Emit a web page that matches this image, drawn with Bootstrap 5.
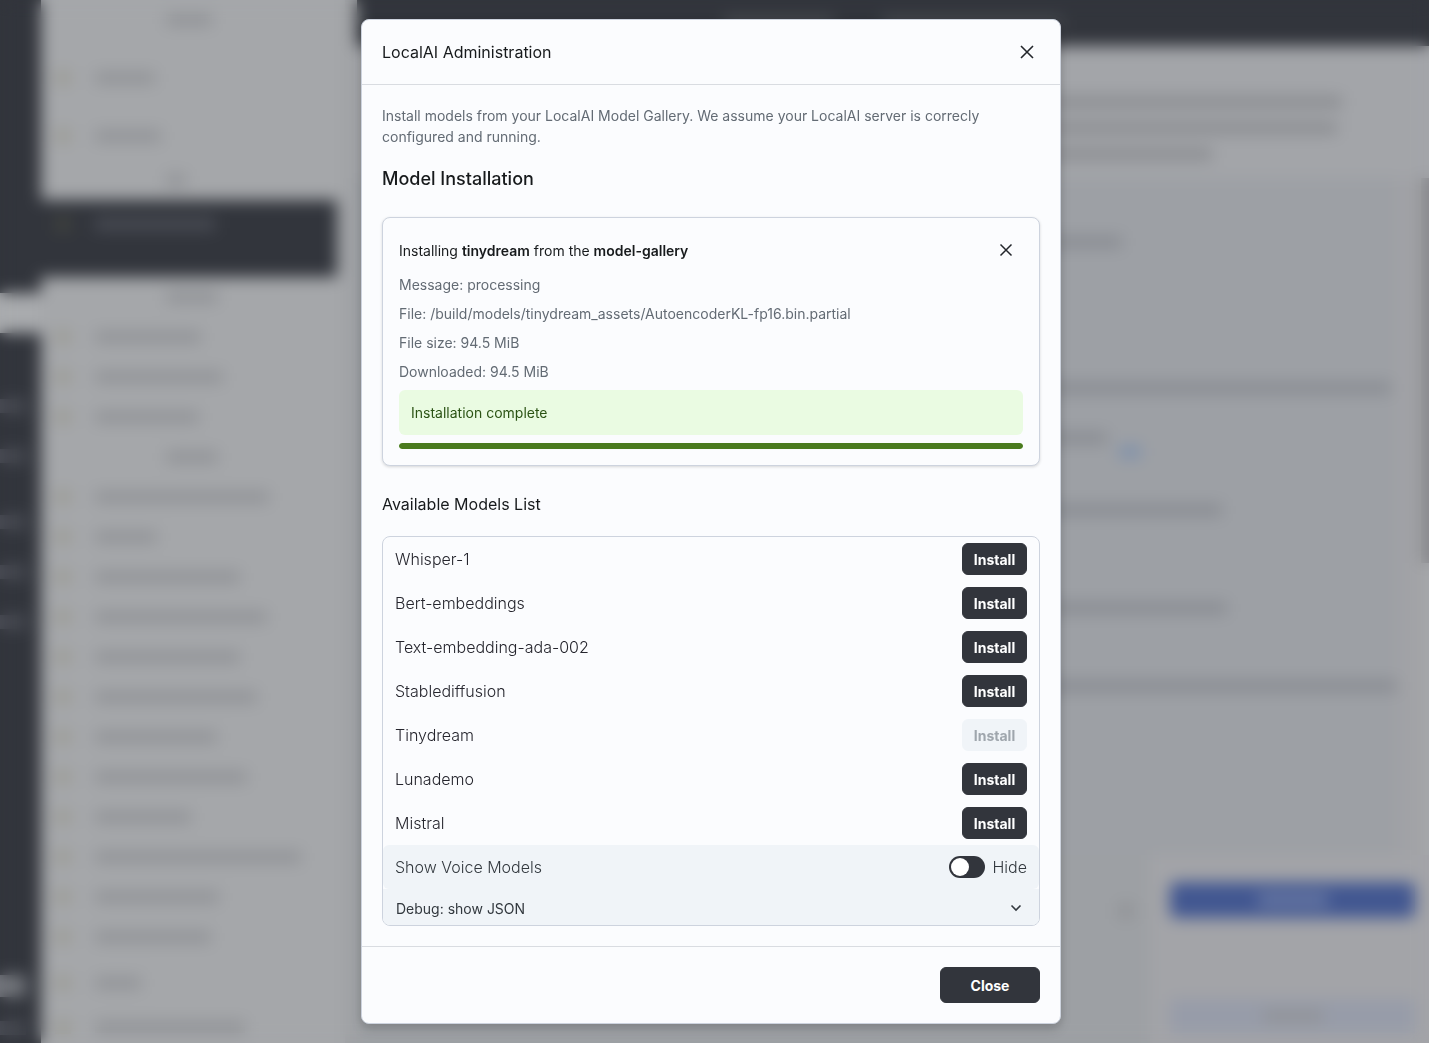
<!DOCTYPE html>
<html lang="en">
<head>
<meta charset="utf-8">
<meta name="viewport" content="width=device-width, initial-scale=1">
<title>LocalAI Administration</title>
<link href="https://cdn.jsdelivr.net/npm/bootstrap@5.3.0/dist/css/bootstrap.min.css" rel="stylesheet">
<style>
:root { --ink: #32353c; --line: #cdd3de; --soft: #f0f4f8; --paper: #fbfcfe; }
body { font-family: Inter, "Liberation Sans", sans-serif; font-size: 14px; line-height: 21px; color: #171a1c; overflow: hidden; }

/* application behind the dialog */
.app-shell { height: 100vh; background: #a5a7aa; overflow: hidden; }
.app-rail { width: 41px; background: var(--ink); padding-top: 293px; }
.rail-current { height: 40px; background: #a9abae; margin-bottom: 66px; }
.rail-dot { width: 26px; height: 14px; margin-bottom: 36px; background: #4a4d55; }
.rail-dot.rail-lit { background: #74777d; height: 22px; }
.rail-space { height: 310px; }
.app-drawer { width: 316px; border-right: 12px solid #9fa1a4; }
.drawer-row { height: 40px; gap: 24px; padding-left: 14px; }
.drawer-row.row-label { padding-left: 125px; }
.drawer-row.row-current { height: 77px; background: var(--ink); margin-right: 8px; }
.ghost-bar { height: 12px; background: #919397; }
.row-current .ghost-bar { background: #4a4d55; margin-bottom: 30px; }
.ghost-icon { width: 16px; height: 14px; background: #9b9b95; }
.row-current .ghost-icon { background: #42443f; margin-bottom: 30px; }
.app-bar { height: 46px; background: var(--ink); }
.app-bar .ghost-bar { background: #4a4c52; }
.chat-text { background: #a3a5a9; height: 132px; padding: 50px 0 0 40px; }
.chat-text .ghost-bar { margin-bottom: 14px; background: #8b8d91; }
.chat-area { background: #9da0a5; padding-left: 60px; border-right: 24px solid #a1a2a6; }
.chat-line { height: 40px; gap: 12px; }
.chat-area .ghost-bar { background: #898c92; }
.ghost-link { width: 22px; height: 12px; background: #7d90ab; align-self: flex-end; }
.chat-scroll { width: 12px; height: 385px; background: #898a8e; }
.composer { height: 188px; background: #9da0a4; }
.composer-side { width: 279px; background: #a3a4a8; padding: 27px 14px 0 20px; }
.send-block { height: 36px; background: #425791; border-radius: 6px; margin-bottom: 81px; }
.send-block .ghost-bar { background: #6b7ba5; }
.call-block { height: 34px; background: #979ca9; }
.blur-veil { position: fixed; inset: 0; backdrop-filter: blur(8px); }

/* dialog */
.admin-modal { padding-right: 7px; }
.admin-modal .modal-dialog { max-width: 700px; margin-top: 0; margin-bottom: 0; min-height: 100%; }
.admin-modal .modal-content { background: var(--paper); border: 1px solid var(--line); border-radius: 8px; box-shadow: 0 2px 8px rgba(21, 21, 21, .12), 0 6px 12px rgba(21, 21, 21, .12); }
.admin-modal .modal-header { height: 65px; padding: 0 20px; border-color: #d9dce1; }
.admin-modal .modal-body { padding: 20px; }
.admin-modal .modal-footer { padding: 20px; border-color: #d9dce1; }
.admin-modal .modal-footer > * { margin: 0; }
.title-text { font-size: 16px; line-height: 24px; font-weight: 400; }
.section-text { font-size: 18px; line-height: 24px; font-weight: 500; margin: 20px 0 26px; }
.list-title { margin: 26px 0 20px; }
.muted-text { color: #636b74; }
.x-button { width: 26px; height: 32px; padding: 0; border: 0; background: none; color: #23262b; }
.install-card { padding: 16px; border: 1px solid var(--line); border-radius: 8px; box-shadow: 0 1px 3px rgba(21, 21, 21, .16); background: var(--paper); }
.done-note { padding: 12px; border-radius: 6px; background: #eafbe2; color: #2b5314; }
.done-track { height: 6px; border-radius: 3px; background: #eafbe2; }
.done-track .progress-bar { background: #4a7a1e; border-radius: 3px; }
.model-list { border: 1px solid var(--line); border-radius: 8px; overflow: hidden; }
.model-row { height: 44px; padding: 0 12px; font-size: 16px; line-height: 24px; font-weight: 300; color: #25252d; }
.voice-row { background: var(--soft); color: #32383e; border-radius: 6px; }
.debug-row { height: 36px; padding: 2px 17px 0 13px; border: 0; background: var(--soft); color: #32383e; }
.solid-button { --bs-btn-color: #fff; --bs-btn-bg: #32353c; --bs-btn-border-color: #32353c; --bs-btn-hover-color: #fff; --bs-btn-hover-bg: #23262b; --bs-btn-disabled-color: #9fa6ad; --bs-btn-disabled-bg: #f0f4f8; --bs-btn-disabled-border-color: #f0f4f8; --bs-btn-disabled-opacity: 1; --bs-btn-border-radius: 6px; --bs-btn-font-size: 14px; --bs-btn-font-weight: 700; --bs-btn-line-height: 21px; }
.install-button { width: 65px; height: 32px; padding: 0; }
.close-button { width: 100px; height: 36px; padding: 0; }
.voice-switch { min-height: 0; padding: 0; gap: 8px; }
.voice-switch .form-check-input { float: none; width: 36px; height: 22px; margin: 0; border: 0; background-color: var(--ink); --bs-form-switch-bg: url("data:image/svg+xml,%3csvg xmlns='http://www.w3.org/2000/svg' viewBox='0 0 22 22'%3e%3ccircle cx='11' cy='11' r='9' fill='%23fff'/%3e%3c/svg%3e"); }
</style>
<script src="https://cdn.jsdelivr.net/npm/bootstrap@5.3.0/dist/js/bootstrap.bundle.min.js"></script>
</head>
<body>

<div class="app-shell d-flex" aria-hidden="true">
  <div class="app-rail flex-shrink-0">
    <div class="rail-current"></div>
    <div class="rail-dot"></div><div class="rail-dot"></div>
    <div class="pt-3"></div>
    <div class="rail-dot"></div><div class="rail-dot"></div><div class="rail-dot"></div>
    <div class="rail-space"></div>
    <div class="rail-dot rail-lit mb-4"></div><div class="rail-dot"></div>
  </div>
  <div class="app-drawer flex-shrink-0" id="drawer"></div>
  <div class="flex-grow-1 d-flex flex-column overflow-hidden">
    <div class="app-bar flex-shrink-0 d-flex align-items-center justify-content-center gap-5"><div class="ghost-bar" style="width: 110px"></div><div class="ghost-bar" style="width: 180px"></div></div>
    <div class="chat-text flex-shrink-0">
      <div class="ghost-bar" style="width: 945px"></div><div class="ghost-bar" style="width: 940px"></div><div class="ghost-bar" style="width: 815px"></div>
    </div>
    <div class="flex-grow-1 d-flex overflow-hidden">
      <div class="chat-area flex-grow-1" id="chat"></div>
      <div class="chat-scroll flex-shrink-0"></div>
    </div>
    <div class="composer flex-shrink-0 d-flex justify-content-end">
      <div class="ghost-bar me-3 mt-5" style="width: 16px; height: 16px"></div>
      <div class="composer-side">
        <div class="send-block d-flex align-items-center justify-content-center"><div class="ghost-bar" style="width: 70px"></div></div>
        <div class="call-block d-flex align-items-center justify-content-center"><div class="ghost-bar" style="width: 60px"></div></div>
      </div>
    </div>
  </div>
</div>
<div class="blur-veil"></div>

<div class="modal admin-modal d-block" tabindex="-1" role="dialog" aria-modal="true" aria-labelledby="dialogTitle">
  <div class="modal-dialog modal-dialog-centered">
    <div class="modal-content">
      <div class="modal-header">
        <h1 class="title-text mb-0" id="dialogTitle">LocalAI Administration</h1>
        <button type="button" class="x-button d-flex align-items-center justify-content-center" aria-label="Close dialog">
          <svg width="24" height="24" viewBox="0 0 24 24" fill="none" stroke="currentColor" stroke-width="1.6"><path d="M6 6l12 12M18 6L6 18"/></svg>
        </button>
      </div>
      <div class="modal-body">
        <p class="muted-text mb-0">Install models from your LocalAI Model Gallery. We assume your LocalAI server is correcly configured and running.</p>
        <h2 class="section-text">Model Installation</h2>

        <section class="install-card">
          <div class="d-flex align-items-center justify-content-between pe-1 mb-2">
            <div>Installing <b class="fw-semibold">tinydream</b> from the <b class="fw-semibold">model-gallery</b></div>
            <button type="button" class="x-button d-flex align-items-center justify-content-center" aria-label="Dismiss installation">
              <svg width="22" height="22" viewBox="0 0 24 24" fill="none" stroke="currentColor" stroke-width="1.6"><path d="M6 6l12 12M18 6L6 18"/></svg>
            </button>
          </div>
          <div class="muted-text d-grid gap-2">
            <div>Message: processing</div>
            <div>File: /build/models/tinydream_assets/AutoencoderKL-fp16.bin.partial</div>
            <div>File size: 94.5 MiB</div>
            <div>Downloaded: 94.5 MiB</div>
          </div>
          <div class="done-note mt-2 mb-2" role="status">Installation complete</div>
          <div class="progress done-track" role="progressbar" aria-label="Installation progress" aria-valuenow="100" aria-valuemin="0" aria-valuemax="100"><div class="progress-bar" style="width: 100%"></div></div>
        </section>

        <h2 class="title-text list-title">Available Models List</h2>

        <div class="model-list">
          <div class="model-row d-flex align-items-center justify-content-between">Whisper-1 <button type="button" class="btn solid-button install-button">Install</button></div>
          <div class="model-row d-flex align-items-center justify-content-between">Bert-embeddings <button type="button" class="btn solid-button install-button">Install</button></div>
          <div class="model-row d-flex align-items-center justify-content-between">Text-embedding-ada-002 <button type="button" class="btn solid-button install-button">Install</button></div>
          <div class="model-row d-flex align-items-center justify-content-between">Stablediffusion <button type="button" class="btn solid-button install-button">Install</button></div>
          <div class="model-row d-flex align-items-center justify-content-between">Tinydream <button type="button" class="btn solid-button install-button" disabled>Install</button></div>
          <div class="model-row d-flex align-items-center justify-content-between">Lunademo <button type="button" class="btn solid-button install-button">Install</button></div>
          <div class="model-row d-flex align-items-center justify-content-between">Mistral <button type="button" class="btn solid-button install-button">Install</button></div>
          <div class="model-row voice-row d-flex align-items-center justify-content-between">
            Show Voice Models
            <div class="form-check form-switch voice-switch d-flex align-items-center mb-0">
              <input class="form-check-input" type="checkbox" role="switch" id="voiceSwitch">
              <label for="voiceSwitch">Hide</label>
            </div>
          </div>
          <button type="button" class="debug-row w-100 d-flex align-items-center justify-content-between">
            Debug: show JSON
            <svg width="12" height="12" viewBox="0 0 12 12" fill="none" stroke="currentColor" stroke-width="1.6"><path d="M1.5 3.5L6 8l4.500-4.500"/></svg>
          </button>
        </div>
      </div>
      <div class="modal-footer">
        <button type="button" class="btn solid-button close-button">Close</button>
      </div>
    </div>
  </div>
</div>

<script>
// Sidebar rows: [kind, size]; size is the bar width, or the height of a gap
const drawerRows = [
  ['label', 46], ['gap', 18], ['item', 60], ['gap', 18], ['item', 66], ['gap', 4], ['label', 20],
  ['current', 120], ['label', 52], ['item', 106], ['item', 128], ['item', 104], ['label', 52],
  ['item', 174], ['item', 62], ['item', 145], ['item', 172], ['item', 145], ['item', 162],
  ['item', 122], ['item', 152], ['item', 96], ['item', 206], ['item', 124], ['item', 116],
  ['gap', 6], ['item', 46], ['gap', 4], ['item', 150]
];
document.getElementById('drawer').innerHTML = drawerRows.map(([kind, size]) =>
  kind === 'gap' ? `<div style="height: ${size}px"></div>` :
  `<div class="drawer-row row-${kind} d-flex align-items-center">${kind === 'label' ? '' : '<div class="ghost-icon"></div>'}<div class="ghost-bar" style="width: ${size}px"></div></div>`
).join('');

// Chat text: [space above, line width, ends with a link]
const chatLines = [[44, 705], [106, 974], [10, 690, true], [32, 805], [58, 810], [38, 980]];
document.getElementById('chat').innerHTML = chatLines.map(([space, width, link]) =>
  `<div class="chat-line d-flex align-items-center" style="margin-top: ${space}px"><div class="ghost-bar" style="width: ${width}px"></div>${link ? '<div class="ghost-link"></div>' : ''}</div>`
).join('');
</script>
</body>
</html>
